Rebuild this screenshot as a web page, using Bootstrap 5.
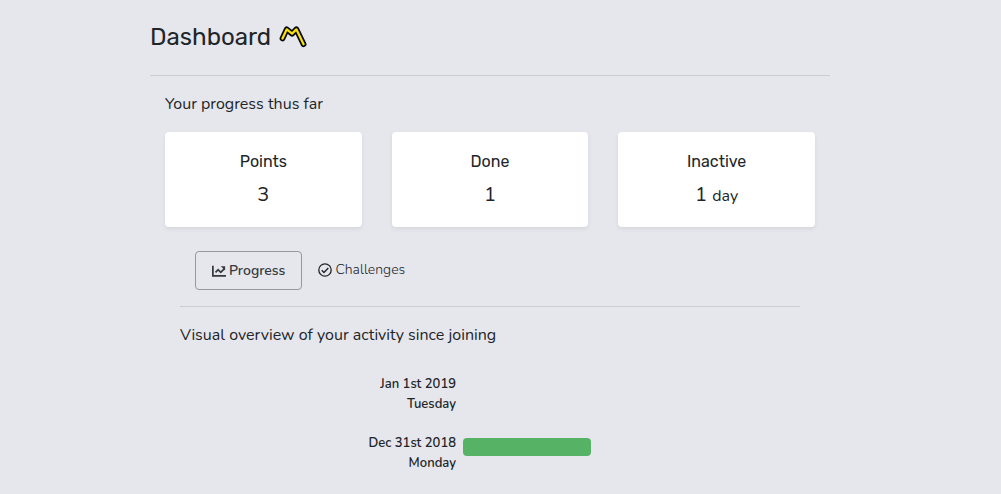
<!DOCTYPE html>
<html lang="en">
<head>
<meta charset="utf-8">
<meta name="viewport" content="width=device-width, initial-scale=1">
<title>Dashboard</title>
<link href="https://cdn.jsdelivr.net/npm/bootstrap@5.3.0/dist/css/bootstrap.min.css" rel="stylesheet">
<style>
body { background: #e6e7ec; color: #212529; font-family: Nunito, Lato, sans-serif; font-size: 16px; line-height: 24px; }
.page-wrap { padding: 22px 21px 0 0; }
.page { max-width: 680px; margin: 0 auto; }
.page-title, .stat-title { font-family: Rubik, Roboto, sans-serif; font-weight: 400; }
.page-title { font-size: 24px; line-height: 30px; }
.logo { width: 29px; height: 23px; }
.rule { border-top: 1px solid #cccdd2; opacity: 1; }
.title-rule { margin: 23px 0 16px; }
.inset { padding: 0 15px; }
.text-intro { font-size: 16px; line-height: 24px; }
.stats { --bs-gutter-x: 30px; }
.stat { border: 0; border-radius: 4px; height: 95px; padding-top: 20px; box-shadow: 0 2px 4px rgba(0, 0, 0, .075); }
.stat-title { font-size: 16px; line-height: 20px; margin-bottom: 11px; }
.stat-value { font-size: 20px; line-height: 24px; }
.stat-value small { font-size: 16px; }
.tabs .btn { font-size: 14px; line-height: 21px; padding: 8px 16px; color: #343a40; border-radius: 4px; gap: 3px; }
.tabs .btn:not(.active) { padding: 7px 16px 9px; font-weight: 300; color: #212529; }
.tabs .btn.active { border-color: #97989b; background: transparent; font-weight: 600; color: #343a40; }
.tabs svg { width: 14px; height: 14px; }
.timeline-row { display: grid; grid-template-columns: 276fr 337fr; column-gap: 7px; margin-bottom: 19px; }
.day { font-size: 13px; line-height: 20px; font-weight: 600; text-align: right; }
.track { padding-top: 5px; }
.bar { height: 18px; border-radius: 4px; background: #56b366; }
.timeline { padding-top: 27px; }
</style>
</head>
<body>
<div class="page-wrap">
<main class="page">
  <header class="d-flex align-items-center gap-2">
    <h1 class="page-title mb-0">Dashboard</h1>
    <svg class="logo" viewBox="0 0 30 24" fill="none" stroke-linecap="round" stroke-linejoin="round" aria-hidden="true">
      <path d="M3.500 13 8 3.500l5.500 4.500L18 3.500l7.500 15.500" stroke="#080808" stroke-width="6"/>
      <path d="M3.500 13 8 3.500l5.500 4.500L18 3.500l7.500 15.500" stroke="#f7df10" stroke-width="2.400"/>
    </svg>
  </header>
  <hr class="rule title-rule">
  <section class="inset">
    <p class="text-intro mb-3">Your progress thus far</p>
    <div class="row stats text-center">
      <div class="col-4"><div class="card stat"><h2 class="stat-title">Points</h2><p class="stat-value mb-0">3</p></div></div>
      <div class="col-4"><div class="card stat"><h2 class="stat-title">Done</h2><p class="stat-value mb-0">1</p></div></div>
      <div class="col-4"><div class="card stat"><h2 class="stat-title">Inactive</h2><p class="stat-value mb-0">1 <small>day</small></p></div></div>
    </div>
    <div class="inset mt-4">
      <div class="inset tabs d-flex" role="tablist">
        <button type="button" class="btn active d-flex align-items-center" role="tab" aria-selected="true">
          <svg viewBox="0 0 16 16" fill="none" stroke="currentColor" stroke-width="2" aria-hidden="true"><path d="M1 2v11.500h15M4 9.500l3-3 3 3 4-4"/><path d="M10 2.500H15v5z" fill="currentColor" stroke="none"/></svg>Progress
        </button>
        <button type="button" class="btn border-0 d-flex align-items-center" role="tab" aria-selected="false">
          <svg viewBox="0 0 16 16" fill="none" stroke="currentColor" stroke-width="1.500" aria-hidden="true"><circle cx="8" cy="8" r="7.100"/><path d="m4.300 8.300 2.500 2.500 5-5" stroke-width="1.600"/></svg>Challenges
        </button>
      </div>
      <hr class="rule my-3">
      <p class="text-intro mb-0">Visual overview of your activity since joining</p>
      <div class="timeline">
        <div class="timeline-row">
          <div class="day">Jan 1st 2019<br>Tuesday</div>
          <div class="track"></div>
        </div>
        <div class="timeline-row">
          <div class="day">Dec 31st 2018<br>Monday</div>
          <div class="track"><div class="bar" style="width:38%"></div></div>
        </div>
      </div>
    </div>
  </section>
</main>
</div>
<script src="https://cdn.jsdelivr.net/npm/bootstrap@5.3.0/dist/js/bootstrap.bundle.min.js"></script>
</body>
</html>
